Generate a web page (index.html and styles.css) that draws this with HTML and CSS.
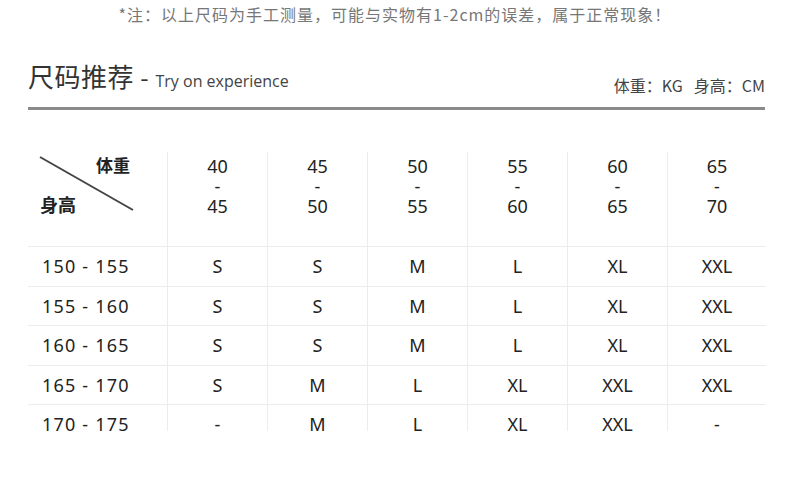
FILE: index.html
```html
<!DOCTYPE html>
<html lang="zh">
<head>
<meta charset="utf-8">
<link rel="stylesheet" href="styles.css">
</head>
<body>
<div class="page">
  <p class="note">*注：以上尺码为手工测量，可能与实物有1-2cm的误差，属于正常现象！</p>
  <div class="head">
    <h1 class="title">尺码推荐 <span class="dash">-</span> <span class="sub">Try on experience</span></h1>
    <div class="units"><span>体重：KG</span><span>身高：CM</span></div>
  </div>
  <div class="rule"></div>
  <div class="table-wrap">
    <div class="table">
      <div class="corner">
        <svg class="diag" width="140" height="94" viewBox="0 0 140 94"><line x1="12" y1="5" x2="105" y2="58" stroke="#444" stroke-width="2"/></svg>
        <span class="c-w">体重</span>
        <span class="c-h">身高</span>
      </div>
      <div class="hc"><span>40</span><span class="hy">-</span><span>45</span></div>
      <div class="hc"><span>45</span><span class="hy">-</span><span>50</span></div>
      <div class="hc"><span>50</span><span class="hy">-</span><span>55</span></div>
      <div class="hc"><span>55</span><span class="hy">-</span><span>60</span></div>
      <div class="hc"><span>60</span><span class="hy">-</span><span>65</span></div>
      <div class="hc"><span>65</span><span class="hy">-</span><span>70</span></div>

      <div class="rl">150 - 155</div><div class="c">S</div><div class="c">S</div><div class="c">M</div><div class="c">L</div><div class="c">XL</div><div class="c">XXL</div>
      <div class="rl">155 - 160</div><div class="c">S</div><div class="c">S</div><div class="c">M</div><div class="c">L</div><div class="c">XL</div><div class="c">XXL</div>
      <div class="rl">160 - 165</div><div class="c">S</div><div class="c">S</div><div class="c">M</div><div class="c">L</div><div class="c">XL</div><div class="c">XXL</div>
      <div class="rl">165 - 170</div><div class="c">S</div><div class="c">M</div><div class="c">L</div><div class="c">XL</div><div class="c">XXL</div><div class="c">XXL</div>
      <div class="rl">170 - 175</div><div class="c">-</div><div class="c">M</div><div class="c">L</div><div class="c">XL</div><div class="c">XXL</div><div class="c">-</div>
    </div>
  </div>
</div>
</body>
</html>
```

FILE: styles.css
```css
html, body {
  margin: 0;
  padding: 0;
  background: #fff;
}
.page {
  width: 790px;
  height: 497px;
  overflow: hidden;
  font-family: "Noto Sans CJK SC", "Noto Sans", sans-serif;
}
.note {
  margin: 0;
  padding-top: 3px;
  text-align: center;
  font-size: 16px;
  line-height: 22px;
  color: #777;
  letter-spacing: 1px;
}
.head {
  display: flex;
  justify-content: space-between;
  align-items: flex-end;
  margin: 34px 25px 0 28px;
  height: 38px;
}
.title {
  margin: 0;
  font-weight: 400;
  font-size: 26px;
  line-height: 32px;
  color: #333;
  letter-spacing: 0.5px;
}
.title .dash {
  font-size: 24px;
}
.title .sub {
  font-family: "Open Sans", "Noto Sans", sans-serif;
  font-size: 16px;
  letter-spacing: 0;
  color: #444;
}
.units {
  display: flex;
  gap: 11px;
  font-size: 16px;
  line-height: 22px;
  color: #444;
  padding-bottom: 1px;
}
.rule {
  margin: 10px 25px 0 28px;
  height: 3px;
  background: #8a8a8a;
}
.table-wrap {
  margin: 42px 0 0 28px;
  height: 279px;
  overflow: hidden;
}
.table {
  display: grid;
  grid-template-columns: 139px repeat(5, 100px) 99px;
  grid-template-rows: 94px repeat(5, 39.5px);
  color: #222;
  font-family: "Noto Sans", sans-serif;
}
.corner {
  position: relative;
}
.diag {
  position: absolute;
  left: 0;
  top: 0;
}
.c-w, .c-h {
  position: absolute;
  font-family: "Noto Sans CJK SC", sans-serif;
  font-weight: 700;
  font-size: 17px;
  line-height: 20px;
}
.c-w {
  left: 68px;
  top: 3px;
}
.c-h {
  left: 12px;
  top: 42px;
  font-size: 18px;
}
.hc {
  border-left: 1px solid #ececec;
  display: flex;
  flex-direction: column;
  align-items: center;
  font-size: 18px;
  line-height: 20px;
  padding-top: 4px;
}
.rl {
  border-top: 1px solid #ececec;
  display: flex;
  align-items: center;
  padding-left: 14px;
  font-size: 18px;
  letter-spacing: 1.2px;
}
.c {
  border-top: 1px solid #ececec;
  border-left: 1px solid #ececec;
  display: flex;
  align-items: center;
  justify-content: center;
  font-size: 18px;
}
```
